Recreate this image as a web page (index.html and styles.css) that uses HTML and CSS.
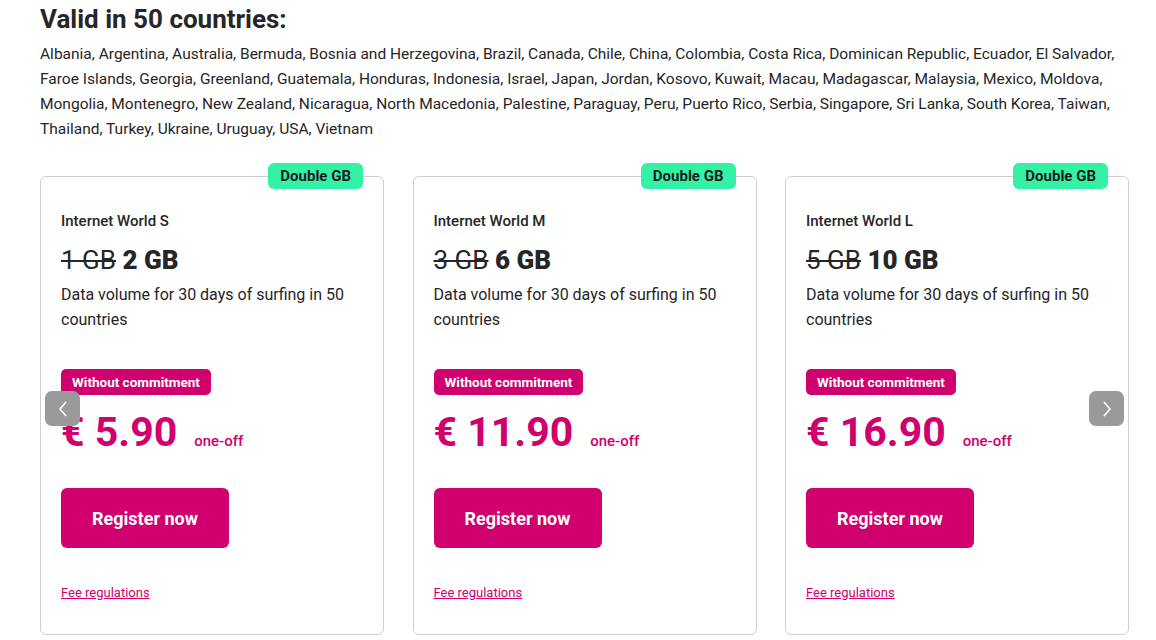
FILE: index.html
```html
<!DOCTYPE html>
<html>
<head>
<meta charset="utf-8">
<link rel="stylesheet" href="styles.css">
</head>
<body>
<div class="page">
  <h2 class="title">Valid in 50 countries:</h2>
  <p class="countries">Albania, Argentina, Australia, Bermuda, Bosnia and Herzegovina, Brazil, Canada, Chile, China, Colombia, Costa Rica, Dominican Republic, Ecuador, El Salvador, Faroe Islands, Georgia, Greenland, Guatemala, Honduras, Indonesia, Israel, Japan, Jordan, Kosovo, Kuwait, Macau, Madagascar, Malaysia, Mexico, Moldova, Mongolia, Montenegro, New Zealand, Nicaragua, North Macedonia, Palestine, Paraguay, Peru, Puerto Rico, Serbia, Singapore, Sri Lanka, South Korea, Taiwan, Thailand, Turkey, Ukraine, Uruguay, USA, Vietnam</p>

  <div class="slider">
    <div class="cards">
      <div class="card">
        <span class="flag">Double GB</span>
        <div class="name">Internet World S</div>
        <div class="volume"><s class="old">1 GB</s> <b>2 GB</b></div>
        <p class="desc">Data volume for 30 days of surfing in 50 countries</p>
        <span class="tag">Without commitment</span>
        <div class="price"><span class="amount">€ 5.90</span><span class="period">one-off</span></div>
        <a class="btn">Register now</a>
        <a class="fee">Fee regulations</a>
      </div>
      <div class="card">
        <span class="flag">Double GB</span>
        <div class="name">Internet World M</div>
        <div class="volume"><s class="old">3 GB</s> <b>6 GB</b></div>
        <p class="desc">Data volume for 30 days of surfing in 50 countries</p>
        <span class="tag">Without commitment</span>
        <div class="price"><span class="amount">€ 11.90</span><span class="period">one-off</span></div>
        <a class="btn">Register now</a>
        <a class="fee">Fee regulations</a>
      </div>
      <div class="card">
        <span class="flag">Double GB</span>
        <div class="name">Internet World L</div>
        <div class="volume"><s class="old">5 GB</s> <b>10 GB</b></div>
        <p class="desc">Data volume for 30 days of surfing in 50 countries</p>
        <span class="tag">Without commitment</span>
        <div class="price"><span class="amount">€ 16.90</span><span class="period">one-off</span></div>
        <a class="btn">Register now</a>
        <a class="fee">Fee regulations</a>
      </div>
    </div>
    <button class="arrow prev" aria-label="Previous"><svg width="12" height="18" viewBox="0 0 12 18"><path d="M9 2 L3 9 L9 16" fill="none" stroke="#fff" stroke-width="1.6"/></svg></button>
    <button class="arrow next" aria-label="Next"><svg width="12" height="18" viewBox="0 0 12 18"><path d="M3 2 L9 9 L3 16" fill="none" stroke="#fff" stroke-width="1.6"/></svg></button>
  </div>
</div>
</body>
</html>
```

FILE: styles.css
```css
html, body {
  margin: 0;
  padding: 0;
  background: #fff;
}
body {
  font-family: Roboto, "Liberation Sans", sans-serif;
  color: #262626;
  overflow: hidden;
}
.page {
  padding: 0 20px 0 40px;
}
.title {
  margin: 0;
  padding-top: 3px;
  font-size: 26px;
  line-height: 32px;
  font-weight: 700;
  color: #262626;
}
.countries {
  margin: 7px 0 0;
  font-size: 15.5px;
  line-height: 25px;
  color: #262626;
}
.slider {
  position: relative;
  margin-top: 20px;
  padding-top: 14px;
}
.cards {
  display: grid;
  grid-template-columns: 344px 344px 344px;
  column-gap: 28.5px;
}
.card {
  position: relative;
  border: 1px solid #cfcfcf;
  border-radius: 6px;
  height: 459px;
  padding: 34px 20px 0;
  box-sizing: border-box;
  display: flex;
  flex-direction: column;
  align-items: flex-start;
}
.flag {
  position: absolute;
  top: -14px;
  right: 20px;
  background: #33f2a5;
  color: #1a1a1a;
  font-weight: 700;
  font-size: 15px;
  line-height: 26px;
  padding: 0 12px;
  border-radius: 6px;
}
.name {
  font-size: 15px;
  font-weight: 500;
  line-height: 20px;
}
.volume {
  margin-top: 14px;
  font-size: 26px;
  line-height: 30px;
  font-weight: 700;
}
.old {
  font-weight: 400;
  color: #262626;
}
.desc {
  margin: 7px 0 0;
  font-size: 16px;
  line-height: 25px;
  width: 300px;
}
.tag {
  margin-top: 37px;
  background: #d0006f;
  color: #fff;
  font-weight: 700;
  font-size: 13.5px;
  line-height: 26px;
  padding: 0 11px;
  border-radius: 5px;
}
.price {
  margin-top: 9px;
  display: flex;
  align-items: baseline;
  color: #d0006f;
}
.amount {
  font-size: 41px;
  line-height: 56px;
  font-weight: 700;
}
.period {
  margin-left: 17px;
  font-size: 15px;
  font-weight: 500;
}
.btn {
  margin-top: 28px;
  width: 168px;
  height: 60px;
  display: flex;
  align-items: center;
  justify-content: center;
  background: #d0006f;
  color: #fff;
  font-weight: 700;
  font-size: 18px;
  border-radius: 6px;
}
.fee {
  margin-top: 37px;
  color: #d0006f;
  font-size: 13px;
  text-decoration: underline;
}
.arrow {
  position: absolute;
  top: 229px;
  width: 35px;
  height: 35px;
  border: none;
  border-radius: 7px;
  background: #9a9a9a;
  display: flex;
  align-items: center;
  justify-content: center;
  padding: 0;
}
.prev { left: 5px; }
.next { left: 1049px; }
```
